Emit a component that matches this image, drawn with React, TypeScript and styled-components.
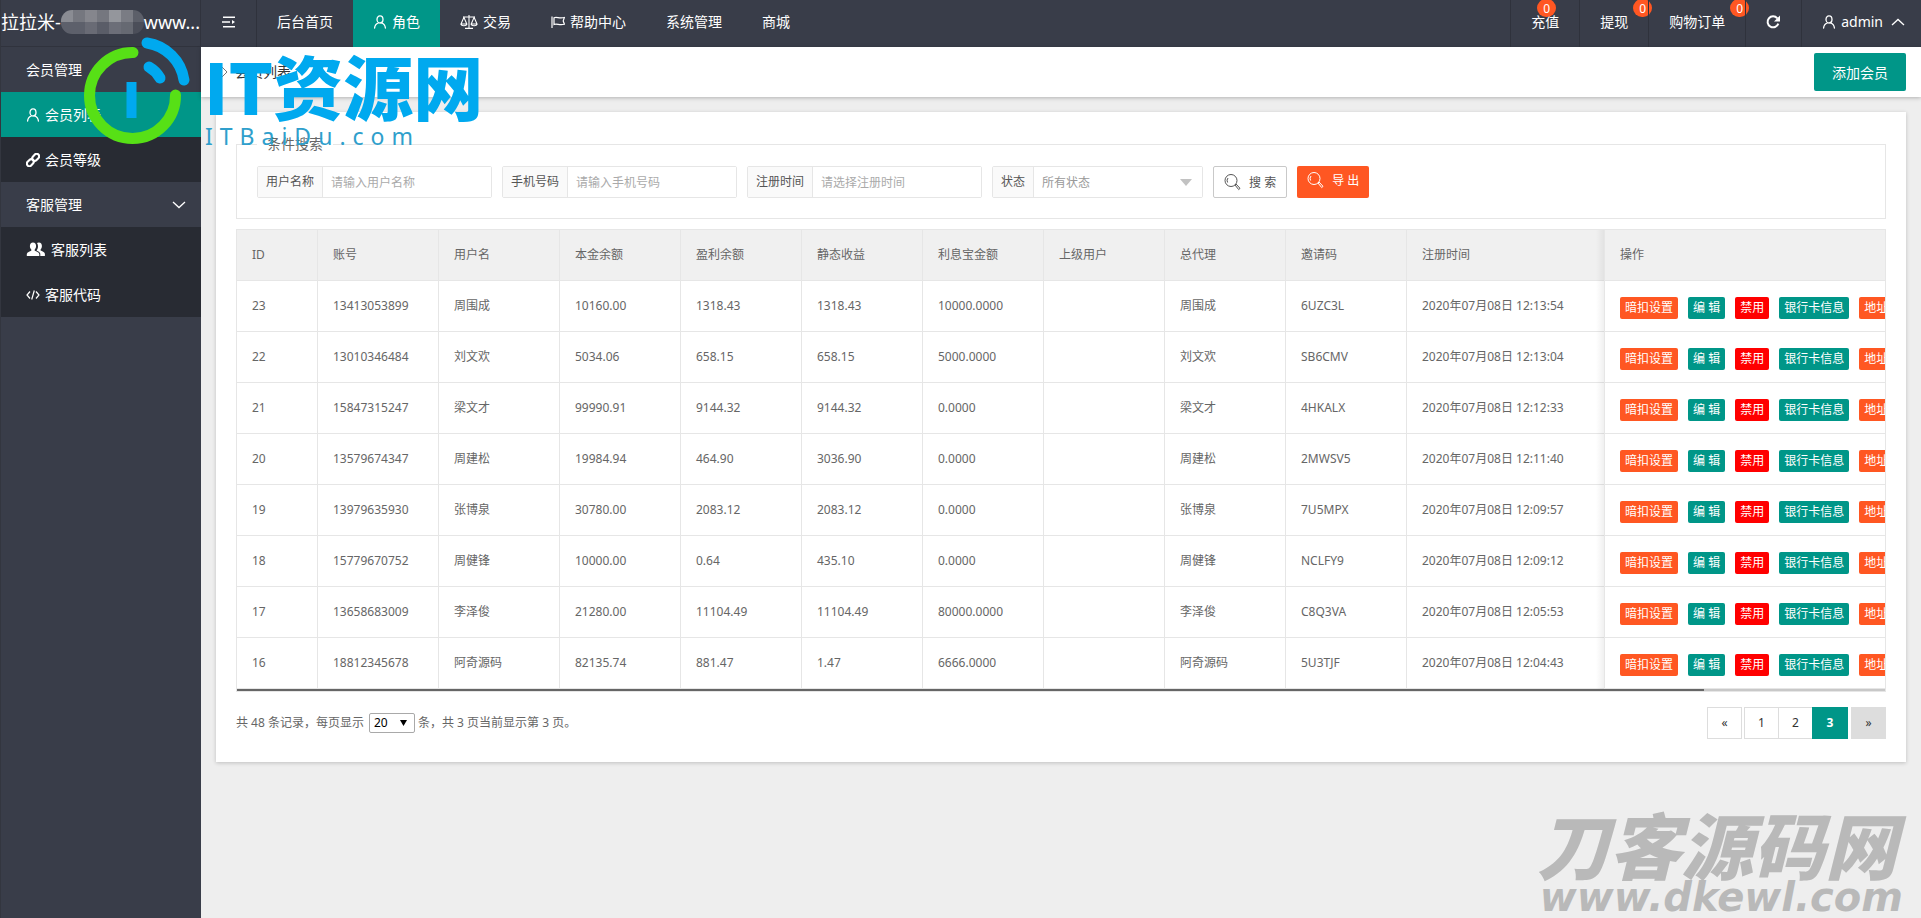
import React, { useState } from "react";
import styled, { createGlobalStyle, css } from "styled-components";

const teal = "#009688";
const orange = "#ff5722";
const dark = "#393d49";
const line = "#e6e6e6";

const GlobalStyle = createGlobalStyle`
  *, *::before, *::after { box-sizing: border-box; }
  body {
    margin: 0;
    background: #eee;
    color: #666;
    font: 14px/24px "Noto Sans", "Noto Sans CJK SC", sans-serif;
  }
  button, input, select { font-family: inherit; }
`;

const Page = styled.div`
  position: relative;
  min-height: 100vh;
  display: grid;
  grid-template-columns: 200px minmax(0, 1fr);
  grid-template-rows: 47px 1fr;
  border-left: 1px solid #33363f;
  overflow: hidden;
`;

const Brand = styled.div`
  display: flex;
  align-items: center;
  padding-bottom: 3px;
  background: ${dark};
  border-right: 1px solid #30333d;
  border-bottom: 1px solid #30333d;
  color: #fff;
  font-size: 18px;
  white-space: nowrap;
`;

const TopBar = styled.header`
  display: flex;
  justify-content: space-between;
  background: ${dark};
`;

const NavGroup = styled.nav`
  display: flex;
`;

const NavItem = styled.a<{ $active?: boolean; $ruled?: boolean }>`
  position: relative;
  display: flex;
  align-items: center;
  gap: 5px;
  padding: 0 20px 3px;
  color: #fff;
  text-decoration: none;
  white-space: nowrap;
  background: ${(p) => (p.$active ? teal : "transparent")};
  ${(p) => p.$ruled && css`border-left: 1px solid #2f323c;`}
  svg { display: block; }
`;

const UserItem = styled(NavItem)`
  padding-right: 16px;
  svg:last-child { margin-left: 3px; }
`;

const ToggleItem = styled.button`
  display: flex;
  align-items: center;
  justify-content: center;
  width: 56px;
  padding: 0 0 3px;
  border: 0;
  border-right: 1px solid #2f323c;
  background: ${dark};
  color: #fff;
`;

const Badge = styled.span<{ $inset?: boolean }>`
  position: absolute;
  top: -1px;
  ${(p) => (p.$inset ? "left: 26px;" : "right: -4px;")}
  width: 19px;
  height: 18px;
  border-radius: 9px;
  background: ${orange};
  color: #fff;
  font-size: 12px;
  line-height: 19px;
  text-align: center;
`;

const Side = styled.aside`
  background: ${dark};
`;

const SideItem = styled.a<{ $kind: "group" | "child"; $active?: boolean }>`
  display: flex;
  align-items: center;
  gap: 5px;
  height: 45px;
  padding: 0 15px 0 25px;
  color: #fff;
  text-decoration: none;
  background: ${(p) => (p.$active ? teal : p.$kind === "group" ? dark : "#282b33")};
  svg { display: block; }
`;

const Grow = styled.span`
  flex: 1;
`;

const Main = styled.main`
  min-width: 0;
`;

const TitleBar = styled.div`
  display: flex;
  align-items: center;
  justify-content: space-between;
  height: 50px;
  padding: 0 15px;
  background: #fff;
  box-shadow: 0 1px 4px rgba(0, 0, 0, 0.25);
`;

const Crumb = styled.h1`
  display: flex;
  align-items: center;
  gap: 7px;
  margin: 0;
  color: #333;
  font-size: 14px;
  font-weight: 400;
`;

const AddButton = styled.button`
  height: 38px;
  padding: 0 18px;
  border: 0;
  border-radius: 2px;
  background: ${teal};
  color: #fff;
  font-size: 14px;
`;

const Card = styled.section`
  margin: 15px;
  padding: 20px 20px 23px;
  background: #fff;
  box-shadow: 0 1px 4px rgba(0, 0, 0, 0.2);
`;

const Search = styled.fieldset`
  margin: 0 0 10px;
  padding: 10px 20px 20px;
  border: 1px solid ${line};
  min-width: 0;
  legend {
    padding: 0 10px;
    font-size: 14px;
    line-height: 24px;
  }
`;

const SearchRow = styled.form`
  display: flex;
  flex-wrap: wrap;
  gap: 10px;
`;

const Field = styled.label`
  display: flex;
  height: 32px;
  border: 1px solid ${line};
  border-radius: 2px;
  font-size: 12px;
  line-height: 30px;
`;

const FieldName = styled.span`
  padding: 0 8px;
  border-right: 1px solid ${line};
  background: #fafafa;
  color: #555;
`;

const FieldInput = styled.input`
  width: 168px;
  padding: 0 8px;
  border: 0;
  background: #fff;
  font-size: 12px;
  &::placeholder { color: #aaa; }
`;

const SelectWrap = styled.span`
  position: relative;
  display: flex;
  svg {
    position: absolute;
    right: 10px;
    top: 12px;
    pointer-events: none;
  }
`;

const FieldSelect = styled.select`
  width: 168px;
  padding: 0 8px;
  border: 0;
  appearance: none;
  background: #fff;
  color: #999;
  font-size: 12px;
`;

const ActionButton = styled.button<{ $solid?: boolean }>`
  display: flex;
  align-items: center;
  gap: 8px;
  height: 32px;
  padding: ${(p) => (p.$solid ? "0 10px 4px" : "0 10px")};
  border: ${(p) => (p.$solid ? "0" : "1px solid #c9c9c9")};
  border-radius: 2px;
  background: ${(p) => (p.$solid ? orange : "#fff")};
  color: ${(p) => (p.$solid ? "#fff" : "#555")};
  font-size: 12px;
`;

const TableBox = styled.div`
  border: 1px solid ${line};
  overflow: hidden;
`;

const Table = styled.table`
  width: 100%;
  table-layout: fixed;
  border-spacing: 0;
  font-size: 12px;
`;

const cell = css`
  height: 51px;
  padding: 0 15px;
  border-right: 1px solid ${line};
  border-bottom: 1px solid ${line};
  font-weight: 400;
  text-align: left;
  white-space: nowrap;
  &:last-child {
    position: relative;
    border-right: 0;
  }
  &:last-child::before {
    content: "";
    position: absolute;
    top: 0;
    bottom: -1px;
    left: -9px;
    width: 8px;
    background: linear-gradient(to right, rgba(0, 0, 0, 0), rgba(0, 0, 0, 0.06));
  }
`;

const Th = styled.th<{ $w?: number }>`
  ${cell}
  background: #f0f0f0;
  ${(p) => p.$w && `width: ${p.$w}px;`}
`;

const Td = styled.td`
  ${cell}
`;

const Actions = styled.div`
  display: flex;
  gap: 10px;
  padding-top: 3px;
`;

const Tag = styled.button<{ $color: string }>`
  flex: none;
  height: 22px;
  padding: 0 5px;
  border: 0;
  border-radius: 2px;
  background: ${(p) => p.$color};
  color: #fff;
  font-size: 12px;
  line-height: 22px;
`;

const ScrollTrack = styled.div`
  height: 2px;
  background: #c8c8c8;
`;

const ScrollThumb = styled.div`
  width: 89%;
  height: 2px;
  background: #666;
`;

const Footer = styled.div`
  display: flex;
  align-items: center;
  justify-content: space-between;
  padding-top: 15px;
  font-size: 12px;
`;

const SizeWrap = styled.label`
  svg {
    margin: 0 11px 1px -18px;
    vertical-align: middle;
    pointer-events: none;
  }
`;

const PageSize = styled.select`
  appearance: none;
  width: 46px;
  height: 20px;
  margin: 0 3px 0 5px;
  padding: 0 0 0 4px;
  border: 1px solid #a9a9a9;
  border-radius: 2px;
  background: #fff;
  color: #000;
  font-size: 12px;
`;

const Pager = styled.nav`
  display: flex;
  height: 32px;
`;

const PageLink = styled.a<{ $state?: "on" | "off"; $gap?: number }>`
  width: ${(p) => (p.$state === "on" ? 36 : 35)}px;
  margin-left: ${(p) => p.$gap ?? -1}px;
  border: 1px solid ${(p) => (p.$state === "on" ? teal : "#ddd")};
  background: ${(p) => (p.$state === "on" ? teal : p.$state === "off" ? "#ddd" : "#fff")};
  color: ${(p) => (p.$state === "on" ? "#fff" : "#333")};
  font-weight: ${(p) => (p.$state === "on" ? 700 : 400)};
  line-height: 30px;
  text-align: center;
  text-decoration: none;
`;

const TopMark = styled.div`
  position: absolute;
  left: 82px;
  top: 36px;
  display: flex;
  gap: 13px;
  pointer-events: none;
`;

const TopMarkTitle = styled.div`
  margin-top: 14px;
  color: #00a9ef;
  font: 900 70px/70px "Noto Sans CJK SC", sans-serif;
  white-space: nowrap;
`;

const TopMarkSite = styled.div`
  padding: 0 0 0 1px;
  color: #2f9fcc;
  font: 400 23px/32px "Noto Sans", sans-serif;
  letter-spacing: 7px;
`;

const CornerMark = styled.div`
  position: absolute;
  right: 18px;
  bottom: 1px;
  color: #b9b9b9;
  text-align: right;
  white-space: nowrap;
  pointer-events: none;
`;

const CornerTitle = styled.div`
  padding-right: 6px;
  font: italic 900 72px/68px "Noto Sans CJK SC", sans-serif;
`;

const CornerSite = styled.div`
  font: italic 700 40px/40px "DejaVu Sans", sans-serif;
`;

const UserIcon = () => (
  <svg width="14" height="14" viewBox="0 0 14 14" fill="none" stroke="currentColor" strokeWidth="1.3" strokeLinecap="round">
    <ellipse cx="7" cy="4.4" rx="3" ry="3.6" />
    <path d="M1.6 13c.2-2.8 1.700-4.300 3.700-5M12.400 13c-.2-2.800-1.700-4.300-3.700-5" />
  </svg>
);

const ScaleIcon = () => (
  <svg width="18" height="16" viewBox="0 0 18 16" fill="none" stroke="currentColor" strokeWidth="1.1">
    <path d="M9 1v13M5 14.4h8M3 3h12M3.9 3.4L1 10h5.8zM14.1 3.4L11.2 10H17zM1 10c.4 2.4 5.4 2.4 5.8 0M11.2 10c.4 2.4 5.4 2.4 5.8 0" />
  </svg>
);

const FlagIcon = () => (
  <svg width="14" height="14" viewBox="0 0 14 14" fill="none" stroke="currentColor" strokeWidth="1.2">
    <path d="M1 1.500V13M3 2.800c3-1.300 5 1.200 10.400-.3l-1.200 3.400 1.200 3.300c-5 1.500-7.400-1-10.400.3z" />
  </svg>
);

const MenuIcon = () => (
  <svg width="14" height="12" viewBox="0 0 14 12" stroke="currentColor" strokeWidth="1.5" fill="currentColor">
    <path d="M1 1.200h12M0 5.900h8M1 10.700h12" />
    <path d="M10 4l3 2-3 2z" stroke="none" />
  </svg>
);

const RefreshIcon = () => (
  <svg width="15" height="14" viewBox="0 0 15 14" fill="none" stroke="currentColor" strokeWidth="2">
    <path d="M11.300 3.300A5.500 5.500 0 1 0 12.300 8.600" />
    <path d="M14 0.500v6H8z" fill="currentColor" stroke="none" />
  </svg>
);

const Chevron = ({ up }: { up?: boolean }) => (
  <svg width="14" height="8" viewBox="0 0 14 8" fill="none" stroke="currentColor" strokeWidth="1.300">
    <path d={up ? "M1 7l6-5.600L13 7" : "M1 1l6 5.600L13 1"} />
  </svg>
);

const LinkIcon = () => (
  <svg width="14" height="14" viewBox="0 0 14 14" fill="none" stroke="currentColor" strokeWidth="2.100">
    <rect x="-2.500" y="-3.800" width="5" height="7.600" rx="2.500" transform="translate(9.700 4.300) rotate(45)" />
    <rect x="-2.500" y="-3.800" width="5" height="7.600" rx="2.500" transform="translate(4.300 9.700) rotate(45)" />
  </svg>
);

const GroupIcon = () => (
  <svg width="20" height="15" viewBox="0 0 20 15" fill="currentColor">
    <path d="M7 .5c2 0 3.200 1.500 3.100 3.600 0 1.500-.6 2.700-1.400 3.500v1.200c1.600.8 4.300 1.500 4.600 3.200V14H.8v-2c.3-1.700 3-2.400 4.500-3.200V7.600C4.400 6.800 3.900 5.600 3.900 4.100 3.800 2 5 .5 7 .5z" />
    <path d="M11 1c.5-.4 1.200-.6 1.900-.6 2 0 3.100 1.600 3 3.500 0 1.500-.5 2.700-1.300 3.500v1.200c1.500.7 3.900 1.400 4.300 3.200V14h-4.600v-2.300c-.3-1.500-1.900-2.400-3.700-3.200.9-1.200 1.400-2.500 1.400-4.300 0-1.200-.4-2.300-1-3.200z" />
  </svg>
);

const CodeIcon = () => (
  <svg width="14" height="12" viewBox="0 0 14 12" fill="none" stroke="currentColor" strokeWidth="1.200">
    <path d="M4 2.500L1 6l3 3.500M10 2.500L13 6l-3 3.500M8.300 1.500l-2.600 9" />
  </svg>
);

const CrumbIcon = () => (
  <svg width="12" height="12" viewBox="0 0 12 12" fill="none" stroke="#777" strokeWidth="1">
    <path d="M1 1l5 5-5 5M6 1l5 5-5 5" />
  </svg>
);

const GlassIcon = () => (
  <svg width="17" height="18" viewBox="0 0 17 18" fill="none" stroke="currentColor" strokeWidth="1">
    <circle cx="7" cy="7.500" r="6" />
    <path d="M3.600 9.500a4 4 0 0 1 .4-4.500M11 12l1-1 4 4.300-1.300 1.300z" />
  </svg>
);

const Caret = ({ w, h, color }: { w: number; h: number; color: string }) => (
  <svg width={w} height={h} viewBox="0 0 12 6" preserveAspectRatio="none">
    <path d="M0 0h12L6 6z" fill={color} />
  </svg>
);

const mosaic = [
  ["#8a8c93", "#75777f", "#85868d", "#75777f", "#94969c", "#7a7c84", "#5c5f69"],
  ["#5d606b", "#5d606b", "#696b75", "#5a5d68", "#6c6e78", "#666972", "#4b4e59"],
];

const Mosaic = () => (
  <svg width="83" height="24" viewBox="0 0 83 24">
    <clipPath id="pill"><rect width="83" height="24" rx="11" /></clipPath>
    <g clipPath="url(#pill)">
      {mosaic.map((row, y) =>
        row.map((c, x) => <rect key={`${x}-${y}`} x={x * 12} y={y * 12} width="12" height="12" fill={c} />)
      )}
    </g>
  </svg>
);

const MarkLogo = () => (
  <svg width="108" height="112" viewBox="0 0 108 112" fill="none" strokeWidth="11" strokeLinecap="round">
    <path d="M50 16.500A43 43 0 1 0 92.500 59" stroke="#57e016" />
    <path d="M64 7A44 44 0 0 1 101 44M66 31q7 4 11 11" stroke="#00a9ef" />
    <path d="M48.500 46v36" stroke="#00a9ef" strokeWidth="10" strokeLinecap="butt" />
  </svg>
);

const heads = ["ID", "账号", "用户名", "本金余额", "盈利余额", "静态收益", "利息宝金额", "上级用户", "总代理", "邀请码", "注册时间", "操作"];

const rows = [
  ["23", "13413053899", "周围成", "10160.00", "1318.43", "1318.43", "10000.0000", "", "周围成", "6UZC3L", "2020年07月08日 12:13:54"],
  ["22", "13010346484", "刘文欢", "5034.06", "658.15", "658.15", "5000.0000", "", "刘文欢", "SB6CMV", "2020年07月08日 12:13:04"],
  ["21", "15847315247", "梁文才", "99990.91", "9144.32", "9144.32", "0.0000", "", "梁文才", "4HKALX", "2020年07月08日 12:12:33"],
  ["20", "13579674347", "周建松", "19984.94", "464.90", "3036.90", "0.0000", "", "周建松", "2MWSV5", "2020年07月08日 12:11:40"],
  ["19", "13979635930", "张博泉", "30780.00", "2083.12", "2083.12", "0.0000", "", "张博泉", "7U5MPX", "2020年07月08日 12:09:57"],
  ["18", "15779670752", "周健锋", "10000.00", "0.64", "435.10", "0.0000", "", "周健锋", "NCLFY9", "2020年07月08日 12:09:12"],
  ["17", "13658683009", "李泽俊", "21280.00", "11104.49", "11104.49", "80000.0000", "", "李泽俊", "C8Q3VA", "2020年07月08日 12:05:53"],
  ["16", "18812345678", "阿奇源码", "82135.74", "881.47", "1.47", "6666.0000", "", "阿奇源码", "5U3TJF", "2020年07月08日 12:04:43"],
];

const tags: [string, string][] = [
  ["暗扣设置", orange],
  ["编 辑", teal],
  ["禁用", "#ff0000"],
  ["银行卡信息", teal],
  ["地址", orange],
];

const columnWidth = (i: number) => (i === 0 ? 81 : i < 10 ? 121 : i === 10 ? 198 : undefined);

export default function App() {
  const [size, setSize] = useState("20");
  return (
    <>
      <GlobalStyle />
      <Page>
        <Brand>拉拉米-<Mosaic />www...</Brand>
        <TopBar>
          <NavGroup>
            <ToggleItem aria-label="菜单"><MenuIcon /></ToggleItem>
            <NavItem href="#">后台首页</NavItem>
            <NavItem href="#" $active><UserIcon />角色</NavItem>
            <NavItem href="#"><ScaleIcon />交易</NavItem>
            <NavItem href="#"><FlagIcon />帮助中心</NavItem>
            <NavItem href="#">系统管理</NavItem>
            <NavItem href="#">商城</NavItem>
          </NavGroup>
          <NavGroup>
            <NavItem href="#" $ruled>充值<Badge $inset>0</Badge></NavItem>
            <NavItem href="#" $ruled>提现<Badge>0</Badge></NavItem>
            <NavItem href="#" $ruled>购物订单<Badge>0</Badge></NavItem>
            <NavItem href="#" $ruled aria-label="刷新"><RefreshIcon /></NavItem>
            <UserItem href="#" $ruled><UserIcon />admin<Chevron up /></UserItem>
          </NavGroup>
        </TopBar>
        <Side>
          <SideItem href="#" $kind="group">会员管理</SideItem>
          <SideItem href="#" $kind="child" $active><UserIcon />会员列表</SideItem>
          <SideItem href="#" $kind="child"><LinkIcon />会员等级</SideItem>
          <SideItem href="#" $kind="group"><Grow>客服管理</Grow><Chevron /></SideItem>
          <SideItem href="#" $kind="child"><GroupIcon />客服列表</SideItem>
          <SideItem href="#" $kind="child"><CodeIcon />客服代码</SideItem>
        </Side>
        <Main>
          <TitleBar>
            <Crumb><CrumbIcon />会员列表</Crumb>
            <AddButton>添加会员</AddButton>
          </TitleBar>
          <Card>
            <Search>
              <legend>条件搜索</legend>
              <SearchRow>
                <Field><FieldName>用户名称</FieldName><FieldInput placeholder="请输入用户名称" /></Field>
                <Field><FieldName>手机号码</FieldName><FieldInput placeholder="请输入手机号码" /></Field>
                <Field><FieldName>注册时间</FieldName><FieldInput placeholder="请选择注册时间" /></Field>
                <Field>
                  <FieldName>状态</FieldName>
                  <SelectWrap>
                    <FieldSelect><option>所有状态</option></FieldSelect>
                    <Caret w={12} h={7} color="#c2c2c2" />
                  </SelectWrap>
                </Field>
                <ActionButton type="button"><GlassIcon />搜 索</ActionButton>
                <ActionButton type="button" $solid><GlassIcon />导 出</ActionButton>
              </SearchRow>
            </Search>
            <TableBox>
              <Table>
                <thead>
                  <tr>{heads.map((h, i) => <Th key={h} $w={columnWidth(i)}>{h}</Th>)}</tr>
                </thead>
                <tbody>
                  {rows.map((r) => (
                    <tr key={r[0]}>
                      {r.map((v, i) => <Td key={i}>{v}</Td>)}
                      <Td>
                        <Actions>
                          {tags.map(([t, c]) => <Tag key={t} $color={c}>{t}</Tag>)}
                        </Actions>
                      </Td>
                    </tr>
                  ))}
                </tbody>
              </Table>
              <ScrollTrack><ScrollThumb /></ScrollTrack>
            </TableBox>
            <Footer>
              <SizeWrap>
                共 48 条记录，每页显示
                <PageSize value={size} onChange={(e) => setSize(e.target.value)}>
                  <option>20</option>
                  <option>50</option>
                </PageSize>
                <Caret w={7} h={6} color="#000" />
                条，共 3 页当前显示第 3 页。
              </SizeWrap>
              <Pager>
                <PageLink href="#">«</PageLink>
                <PageLink href="#" $gap={2}>1</PageLink>
                <PageLink href="#">2</PageLink>
                <PageLink href="#" $state="on">3</PageLink>
                <PageLink href="#" $state="off" $gap={3}>»</PageLink>
              </Pager>
            </Footer>
          </Card>
        </Main>
        <TopMark aria-hidden="true">
          <MarkLogo />
          <div>
            <TopMarkTitle>IT资源网</TopMarkTitle>
            <TopMarkSite>ITBaiDu.com</TopMarkSite>
          </div>
        </TopMark>
        <CornerMark aria-hidden="true">
          <CornerTitle>刀客源码网</CornerTitle>
          <CornerSite>www.dkewl.com</CornerSite>
        </CornerMark>
      </Page>
    </>
  );
}
